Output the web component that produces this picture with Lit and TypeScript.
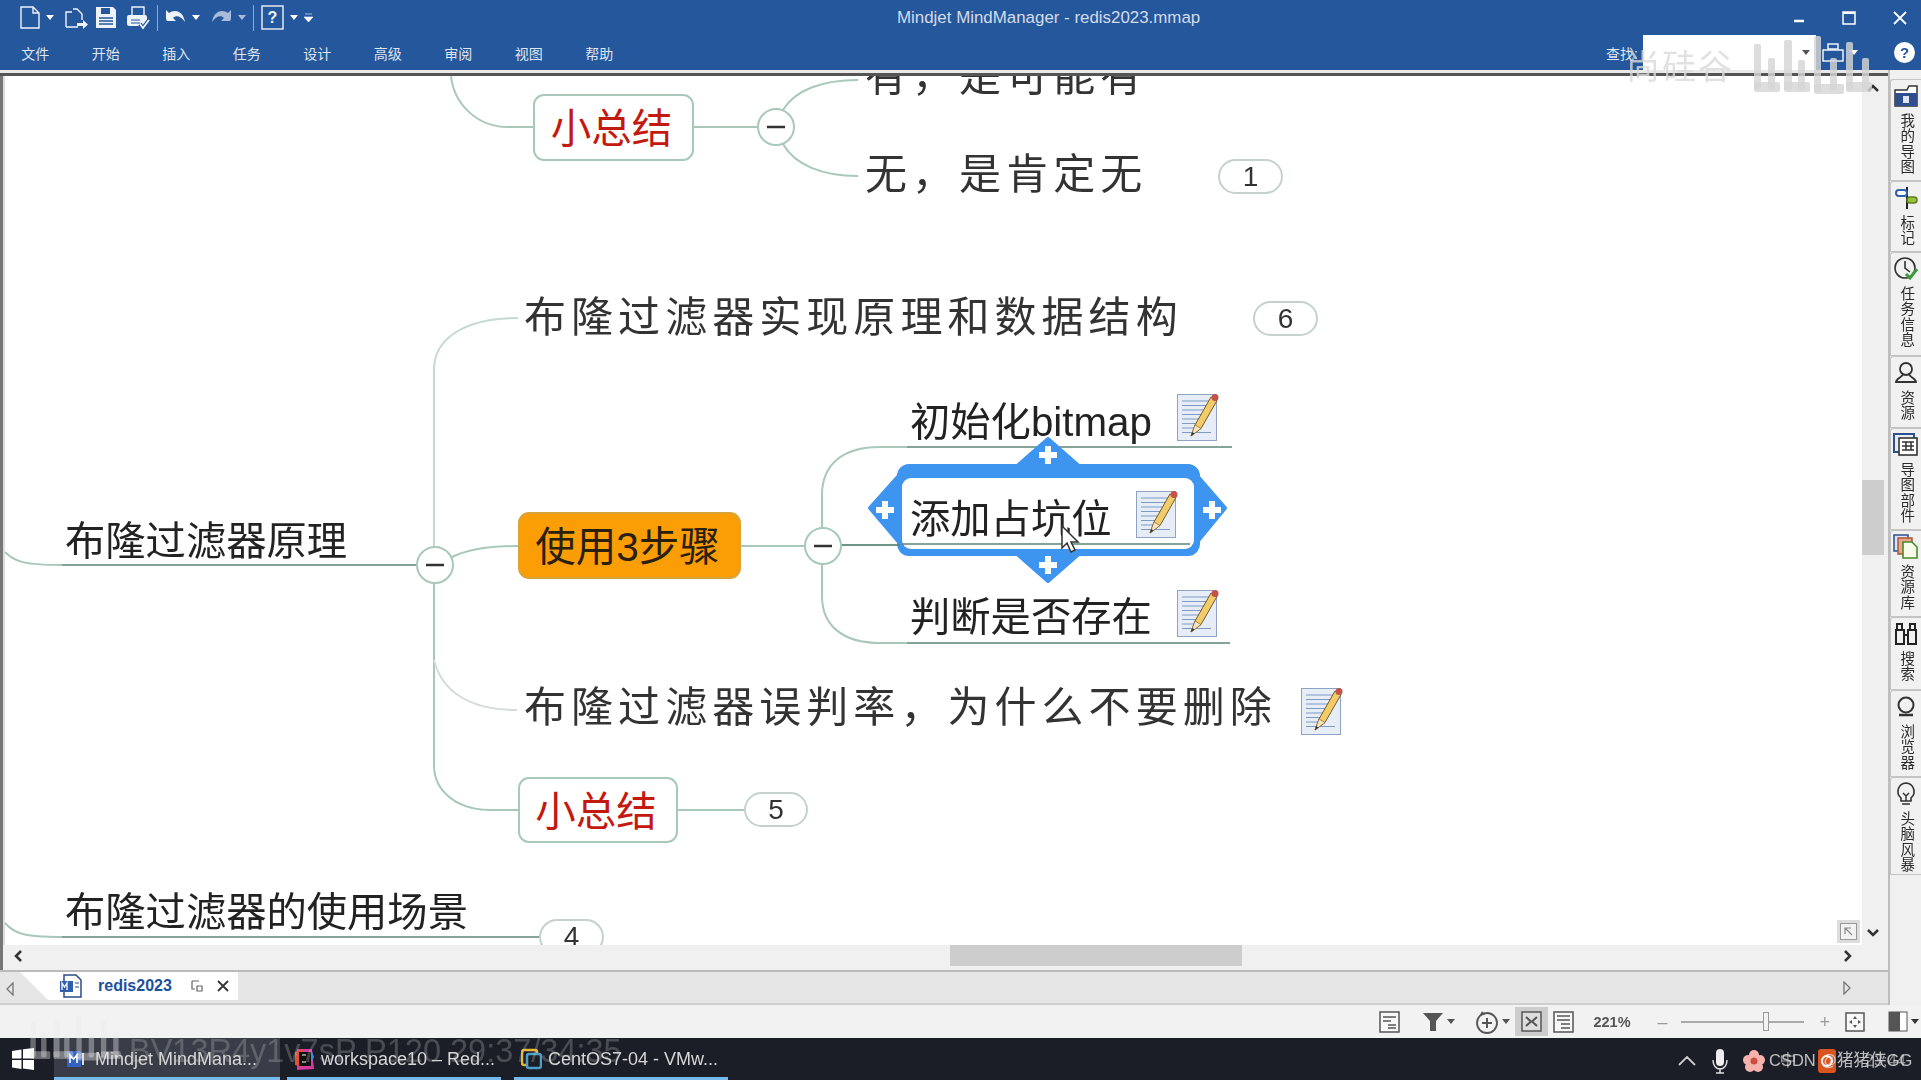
import { LitElement, html, css, svg } from "lit";
import { customElement } from "lit/decorators.js";

const CANVAS_TOP = 76;
const arrow = (c = "#fff") => html`<svg class="drop" width="8" height="5" viewBox="0 0 8 5"><path d="M0 0h8L4 5z" fill=${c}/></svg>`;

const noteIcon = svg`
  <rect x="0.5" y="1.5" width="39" height="46" fill="#e6edf7" stroke="#8ea4c6"/>
  <g stroke="#7d99c4" stroke-width="1.2">
    <path d="M5 8h29M5 12.5h29M5 17h26M5 21.5h22M5 26h20M5 30.5h18M5 35h16M5 39.5h29"/>
  </g>
  <path d="M14 43l4-11L34 4l6 3.5L24 35.500z" fill="#f2cb6a" stroke="#7a5a25" stroke-width="1"/>
  <path d="M14 43l4-11 6 3.500z" fill="#f6e4c0" stroke="#7a5a25" stroke-width=".6"/>
  <path d="M14 43l1.300-4 2.200 1.500z" fill="#333"/>
  <circle cx="38" cy="4.500" r="3.500" fill="#c4524a"/>
`;

const links = svg`
  <g fill="none" stroke="#a8c8ba" stroke-width="2">
    <path d="M451 76C454 105 478 127 508 127H533"/>
    <path d="M694 127H758"/>
    <path d="M783 110C795 90 822 80 858 80"/>
    <path d="M783 144C795 165 822 176 858 176"/>
    <path d="M434 547V370C434 338 465 318 518 318" stroke="#c6d9d0"/>
    <path d="M434 583V765C434 792 458 810 490 810H518"/>
    <path d="M434 660C442 692 470 710 517 710" stroke="#d4dbd8"/>
    <path d="M452 557C468 549 490 546 518 546"/>
    <path d="M741 546H805"/>
    <path d="M822 528V495C822 465 842 447 880 447H907"/>
    <path d="M822 564V596C822 625 842 643 880 643H907"/>
    <path d="M841 545H905"/>
    <path d="M678 810H744"/>
    <path d="M5 552C14 561 22 565 62 565"/>
    <path d="M5 923C14 933 22 937 62 937"/>
  </g>
  <g fill="none" stroke="#5d8574" stroke-width="1.600">
    <path d="M62 565H416"/>
    <path d="M62 937H540"/>
    <path d="M907 447H1232"/>
    <path d="M907 643H1230"/>
  </g>
`;

const circle = (x: number, y: number) => svg`
  <circle cx=${x} cy=${y} r="18" fill="#fff" stroke="#a8c8ba" stroke-width="2"/>
  <path d="M${x - 9} ${y}h18" stroke="#333" stroke-width="2.500"/>
`;

const plus = (x: number, y: number) => svg`<path d="M${x - 9} ${y}h18M${x} ${y - 9}v18" stroke="#fff" stroke-width="6"/>`;

const selection = svg`
  <g fill="#3d95f0" stroke="#3d95f0" stroke-width="4" stroke-linejoin="round">
    <rect x="899" y="466" width="299" height="88" rx="10"/>
    <path d="M1015 468L1048 439L1081 468Z"/>
    <path d="M1015 552L1048 581L1081 552Z"/>
    <path d="M904 470L870 508L904 548Z"/>
    <path d="M1192 470L1225 508L1192 548Z"/>
  </g>
  <rect x="902" y="478" width="292" height="71" rx="9" fill="#fff"/>
  <path d="M842 545H900" stroke="#5d8574" stroke-width="1.600"/>
  <path d="M902 544H1190" stroke="#5d8574" stroke-width="1.600"/>
  ${plus(1048, 455)}${plus(885, 510)}${plus(1212, 510)}${plus(1048, 565)}
`;

const cursor = svg`<path d="M1062 526v22l5-5 4 9 4-2-4-8h7z" fill="#fff" stroke="#333" stroke-width="1.500"/>`;

const TEXTS = [
  { t: "有，是可能有", x: 865, y: 77, c: "wide" },
  { t: "无，是肯定无", x: 865, y: 175, c: "wide" },
  { t: "布隆过滤器实现原理和数据结构", x: 524, y: 318, c: "wide" },
  { t: "初始化bitmap", x: 910, y: 423, c: "" },
  { t: "添加占坑位", x: 910, y: 520, c: "" },
  { t: "判断是否存在", x: 910, y: 618, c: "" },
  { t: "布隆过滤器原理", x: 65, y: 542, c: "" },
  { t: "布隆过滤器误判率，为什么不要删除", x: 524, y: 708, c: "wide" },
  { t: "布隆过滤器的使用场景", x: 65, y: 913, c: "" },
];
const BOXES = [
  { t: "小总结", x: 533, y: 94, w: 161, h: 67, c: "red" },
  { t: "使用3步骤", x: 518, y: 512, w: 223, h: 67, c: "orange" },
  { t: "小总结", x: 518, y: 777, w: 160, h: 66, c: "red" },
];
const BADGES = [
  { t: "1", x: 1218, y: 159, w: 65, h: 35 },
  { t: "6", x: 1253, y: 301, w: 65, h: 35 },
  { t: "5", x: 744, y: 792, w: 64, h: 35 },
  { t: "4", x: 539, y: 919, w: 65, h: 36 },
];
const NOTES = [
  { x: 1177, y: 393 },
  { x: 1136, y: 490 },
  { x: 1177, y: 589 },
  { x: 1301, y: 687 },
];

const TABS: { t: string; h: number; icon: any }[] = [
  { t: "我的导图", h: 102, icon: svg`<path d="M3 8h12l2-4h8v20H3z" fill="#fff" stroke="#333" stroke-width="1.500" transform="translate(-1 -1)"/><rect x="2" y="10" width="22" height="13" fill="#2f4f8f"/><rect x="10" y="13" width="6" height="7" fill="#dfe6f2"/>` },
  { t: "标记", h: 71, icon: svg`<path d="M14 2v22" stroke="#222" stroke-width="2" fill="none"/><rect x="3" y="5" width="11" height="6" rx="3" fill="#fff" stroke="#2f5fae" stroke-width="2"/><rect x="14" y="12" width="10" height="6" rx="3" fill="#9ac13c" stroke="#5a7f1c" stroke-width="1.500"/>` },
  { t: "任务信息", h: 104, icon: svg`<circle cx="12" cy="12" r="10" fill="none" stroke="#333" stroke-width="1.600"/><path d="M12 5v7l5 4" fill="none" stroke="#333" stroke-width="1.600"/><path d="M13 18l4 4 7-9" fill="none" stroke="#3c9a3c" stroke-width="3"/>` },
  { t: "资源", h: 72, icon: svg`<circle cx="13" cy="9" r="6" fill="none" stroke="#333" stroke-width="1.800"/><path d="M10 14c0 3-7 4-7 8h20c0-4-7-5-7-8" fill="none" stroke="#333" stroke-width="1.800"/>` },
  { t: "导图部件", h: 102, icon: svg`<rect x="1" y="2" width="20" height="18" fill="#e8eef8" stroke="#2f4f8f" stroke-width="2"/><rect x="6" y="6" width="18" height="17" fill="#fff" stroke="#333" stroke-width="1.600"/><path d="M9 14h12M13 10v8M18 10v8M9 10h12M9 18h12" stroke="#333" stroke-width="1.500"/>` },
  { t: "资源库", h: 87, icon: svg`<rect x="1" y="1" width="14" height="16" fill="#dde6f6" stroke="#2f4f8f" stroke-width="1.500"/><rect x="5" y="4" width="14" height="16" fill="#e9a68a" stroke="#b0552f" stroke-width="1.500"/><path d="M10 8h9l5 5v11H10z" fill="#f7fbe9" stroke="#4a8a2a" stroke-width="1.600"/>` },
  { t: "搜索", h: 73, icon: svg`<rect x="3" y="9" width="8" height="14" fill="none" stroke="#222" stroke-width="2"/><rect x="15" y="9" width="8" height="14" fill="none" stroke="#222" stroke-width="2"/><rect x="4" y="3" width="5" height="6" fill="none" stroke="#222" stroke-width="2"/><rect x="17" y="3" width="5" height="6" fill="none" stroke="#222" stroke-width="2"/><path d="M11 14h4" stroke="#222" stroke-width="2"/>` },
  { t: "浏览器", h: 87, icon: svg`<circle cx="13" cy="11" r="7.500" fill="none" stroke="#333" stroke-width="2"/><path d="M6 21h14" stroke="#333" stroke-width="2.500"/>` },
  { t: "头脑风暴", h: 98, icon: svg`<path d="M13 2a8.500 8.500 0 0 0-5 15v3h10v-3a8.500 8.500 0 0 0-5-15z" fill="none" stroke="#333" stroke-width="1.600"/><path d="M10 12l3 3 3-3M13 15v5M9 23h8" fill="none" stroke="#333" stroke-width="1.500"/>` },
];

const biliBars = (bars: number[][], fill: string) => svg`${bars.map(([x, y, h, w]) => svg`<rect x=${x} y=${y} width=${w ?? 7} height=${h} rx="2" fill=${fill}/>`)}`;
const BILI = [
  [2, 8, 46], [2, 46, 10, 26], [16, 22, 32], [32, 4, 50, 8], [32, 46, 10, 26], [46, 24, 30],
  [62, 0, 56], [62, 48, 10, 30], [78, 22, 32], [94, 6, 48], [94, 46, 10, 26], [110, 22, 32],
];

@customElement("app-root")
export class AppRoot extends LitElement {
  static styles = css`
    :host { display: block; width: 1921px; height: 1080px; position: relative; overflow: hidden; background: #f0f0f0;
      font-family: "Liberation Sans", "Noto Sans CJK SC", sans-serif; color: #222; }
    .app { display: flex; flex-direction: column; height: 1080px; filter: blur(0.45px); }
    .ribbon { height: 70px; background: #25579c; color: #dfe6f1; flex: none; display: flex; flex-direction: column; }
    .titlerow { height: 35px; display: grid; grid-template-columns: 897px 302px 1fr; align-items: center; }
    .qa { display: flex; align-items: center; padding-left: 20px; gap: 6px; }
    .qa svg { display: block; }
    .sep { width: 1px; height: 26px; background: #8fa9cf; margin: 0 1px; }
    .title { text-align: center; font: 16.900px "Liberation Sans", sans-serif; color: #d4dcea; white-space: nowrap; }
    .win { display: flex; justify-content: flex-end; align-items: center; padding-right: 14px; gap: 37px; }
    .menurow { height: 35px; display: flex; align-items: center; }
    .menu { display: flex; }
    .menu span { width: 70.500px; text-align: center; font-size: 14px; color: #dfe6f1; }
    .find { margin-left: auto; display: flex; align-items: center; font-size: 14px; }
    .find-input { width: 173px; height: 35px; margin: 0 6px 0 5px; background: #fff; display: flex; align-items: center; justify-content: flex-end; padding-right: 6px; box-sizing: border-box; }
    .find .help { width: 21px; height: 21px; border-radius: 50%; background: #fff; color: #25579c; font: bold 15px/21px "Liberation Sans", sans-serif; text-align: center; margin: 0 6px 0 36px; }

    .work { flex: 1; display: flex; min-height: 0; }
    .doc { width: 1888px; flex: none; display: flex; flex-direction: column; border-right: 2px solid #bdbdbd; }
    .rule { height: 6px; flex: none; background: #e9e9e9; border-bottom: 3px solid #555; box-sizing: border-box; }
    .mid { height: 869px; flex: none; display: flex; }
    .canvas { width: 1862px; flex: none; background: #fff; position: relative; overflow: hidden; box-shadow: inset 3px 0 #777, inset 5px 0 #ddd; }
    .canvas > svg.links { position: absolute; left: 0; top: ${-CANVAS_TOP}px; }
    .vs { flex: 1; background: #f0f0f0; display: flex; flex-direction: column; align-items: center; justify-content: space-between; position: relative; padding: 8px 5px 8px 0; box-sizing: border-box; }
    .vthumb { position: absolute; left: 0; top: 404px; width: 22px; height: 75px; background: #cdcdcd; }
    .t { position: absolute; white-space: nowrap; font-size: 40.300px; line-height: 1; transform: translateY(-50%); color: #222; }
    .t.wide { font-size: 42px; letter-spacing: 5.050px; color: #333; }
    .box { position: absolute; box-sizing: border-box; border-radius: 11px; display: flex; align-items: center; justify-content: center; font-size: 40.500px; line-height: 1; padding: 4px 4px 0 0; }
    .box.red { background: #fff; border: 2px solid #a8c8ba; color: #c4190f; }
    .box.orange { background: #fb9d05; border: 2px solid #d8a437; color: #2a2010; }
    .badge { position: absolute; box-sizing: border-box; background: #fff; border: 2px solid #c5d2cc; border-radius: 18px; display: flex; align-items: center; justify-content: center; font: 28px/1 "Liberation Sans", sans-serif; color: #333; }
    .note { position: absolute; }
    .corner { position: absolute; right: 2px; bottom: 2px; width: 23px; height: 23px; background: #ddd; display: flex; align-items: center; justify-content: center; }

    .hs { height: 25px; flex: none; background: #f0f0f0; display: flex; align-items: center; justify-content: space-between; padding: 0 36px 4px 14px; box-sizing: border-box; position: relative; box-shadow: inset 3px 0 #777; }
    .hthumb { position: absolute; left: 950px; top: 0; width: 292px; height: 21px; background: #cdcdcd; }
    .tabs { height: 35px; flex: none; box-sizing: border-box; background: #e6e6e6; border-top: 2px solid #bbb; border-bottom: 2px solid #cfcfcf; display: flex; align-items: flex-start; padding-left: 6px; position: relative; }
    .back { display: block; margin-top: 10px; }
    .tab { margin-left: 6px; width: 218px; height: 28px; background: #fff; clip-path: polygon(0 0, 100% 0, 100% 100%, 28px 100%); display: flex; align-items: center; padding-left: 39px; box-sizing: border-box; gap: 8px; }
    .tab b { font: bold 16px "Liberation Sans", sans-serif; color: #1d4f9f; margin: 0 9px 0 7px; width: 76px; }
    .tabs .fwd { position: absolute; right: 37px; top: 9px; }

    .panel { flex: 1; padding-top: 9px; background: #f0f0f0; display: flex; flex-direction: column; }
    .ptab { box-sizing: border-box; border: 1px solid #c4c4c4; border-right: none; border-top-left-radius: 3px; display: flex; flex-direction: column; align-items: center; padding-top: 3px; background: #f1f1f1; }
    .ptab svg { flex: none; }
    .ptab span { writing-mode: vertical-rl; white-space: nowrap; font-size: 14.500px; line-height: 1; margin-top: 4px; letter-spacing: 1px; color: #2b2b2b; }

    .status { height: 33px; flex: none; background: #f2f2f2; display: flex; align-items: center; justify-content: flex-end; gap: 0; padding-right: 2px; color: #555; }
    .status .item { display: flex; align-items: center; gap: 3px; }
    .status .sel { background: #cdcdcd; width: 33px; height: 29px; display: flex; align-items: center; justify-content: center; }
    .pct { font: bold 14.500px "Liberation Sans", sans-serif; color: #555; width: 44px; }
    .slider { width: 123px; height: 2px; background: #aaa; position: relative; }
    .slider i { position: absolute; left: 82px; top: -9px; width: 6px; height: 19px; background: #f2f2f2; border: 1px solid #999; box-sizing: border-box; }
    .zoomsign { color: #999; font: 18px/1 "Liberation Sans", sans-serif; }

    .taskbar { height: 42px; flex: none; background: #1b1d27; display: flex; align-items: stretch; color: #d7d7d7; font: 18px "Liberation Sans", sans-serif; }
    .start { width: 54px; display: flex; align-items: center; justify-content: center; flex: none; padding-right: 8px; box-sizing: border-box; }
    .task { width: 214px; flex: none; margin-right: 13px; border-bottom: 3px solid #76b9ed; box-sizing: border-box; display: flex; align-items: center; padding: 3px 0 0 7px; gap: 6px; white-space: nowrap; overflow: hidden; }
    .task.on { background: #3a3d47; width: 226px; margin-right: 7px; padding-left: 12px; gap: 8px; }
    .tray { margin-left: auto; display: flex; align-items: center; padding: 3px 15px 0 0; color: #cfcfcf; white-space: nowrap; font-size: 16.500px; }

    .wm { position: absolute; pointer-events: none; }
    .wm-sgg { left: 1626px; top: 50px; font-size: 34px; line-height: 1; letter-spacing: 2px; color: rgba(218,218,218,.8); white-space: nowrap; }
    .wm-bv { left: 129px; top: 1035px; font: 32.500px/1 "Liberation Sans", sans-serif; color: rgba(205,205,205,.27); white-space: nowrap; }
    .wm-csdn { left: 1769px; top: 1051px; font-size: 16.500px; line-height: 1.2; color: rgba(225,225,225,.82); white-space: pre; }
  `;

  render() {
    return html`<div class="app">
      ${this.ribbon()}
      <div class="work">
        <div class="doc">
          <div class="rule"></div>
          <div class="mid">
            ${this.canvas()}
            <div class="vs">
              <svg width="12" height="8" viewBox="0 0 12 8"><path d="M1 7l5-5 5 5" fill="none" stroke="#333" stroke-width="2.500"/></svg>
              <div class="vthumb"></div>
              <svg width="12" height="8" viewBox="0 0 12 8"><path d="M1 1l5 5 5-5" fill="none" stroke="#333" stroke-width="2.500"/></svg>
            </div>
          </div>
          <div class="hs">
            <svg width="8" height="12" viewBox="0 0 8 12"><path d="M7 1L2 6l5 5" fill="none" stroke="#333" stroke-width="2.500"/></svg>
            <div class="hthumb"></div>
            <svg width="8" height="12" viewBox="0 0 8 12"><path d="M1 1l5 5-5 5" fill="none" stroke="#333" stroke-width="2.500"/></svg>
          </div>
          <div class="tabs">
            <svg class="back" width="8" height="14" viewBox="0 0 8 14"><path d="M7 1L1 7l6 6z" fill="none" stroke="#777" stroke-width="1.300"/></svg>
            <div class="tab">
              <svg width="24" height="24" viewBox="0 0 24 24"><path d="M5 1h12l5 5v17H5z" fill="#fff" stroke="#2c4a86" stroke-width="1.500"/><rect x="1" y="7" width="13" height="11" fill="#2f5fae"/><path d="M3 16V9l2.500 4L8 9v7" stroke="#fff" fill="none" stroke-width="1.300"/><path d="M16 9h4M16 13h4" stroke="#2c4a86"/></svg>
              <b>redis2023</b>
              <svg width="12" height="12" viewBox="0 0 12 12"><path d="M1 1h7M1 1v8h3M6 6h5v5H6z" fill="none" stroke="#666" stroke-width="1.200"/></svg>
              <svg style="margin-left:6px" width="12" height="12" viewBox="0 0 12 12"><path d="M1 1l10 10M11 1L1 11" stroke="#333" stroke-width="1.800"/></svg>
            </div>
            <svg class="fwd" width="8" height="14" viewBox="0 0 8 14"><path d="M1 1l6 6-6 6z" fill="none" stroke="#777" stroke-width="1.300"/></svg>
          </div>
        </div>
        <div class="panel">
          ${TABS.map(t => html`<div class="ptab" style="height:${t.h}px">
            <svg width="26" height="26" viewBox="0 0 26 26">${t.icon}</svg><span>${t.t}</span></div>`)}
        </div>
      </div>
      ${this.status()}
      ${this.taskbar()}
    </div>
    ${this.watermarks()}`;
  }

  ribbon() {
    const s = "#eef3fa";
    return html`<div class="ribbon">
      <div class="titlerow">
        <div class="qa">
          <svg width="20" height="23" viewBox="0 0 20 23"><path d="M1 1h12l6 6v15H1zM13 1v6h6" fill="none" stroke=${s} stroke-width="1.400"/></svg>${arrow()}
          <svg style="margin-left:5px" width="24" height="23" viewBox="0 0 24 23"><path d="M8 3h4l5 5v6M1 21V6h6M1 21h12" fill="none" stroke=${s} stroke-width="1.400"/><path d="M12 17h6v-3l5 4.500-5 4.500v-3h-6z" fill=${s}/></svg>
          <svg width="22" height="23" viewBox="0 0 22 23"><path d="M1 1h17l3 3v18H1z" fill=${s}/><rect x="6" y="2" width="9" height="6" fill="#25579c"/><path d="M4 12h14M4 15h14M4 18h14" stroke="#25579c" stroke-width="1.500"/></svg>
          <svg style="margin-left:3px" width="24" height="24" viewBox="0 0 24 24"><path d="M6 9V1h12v8" fill="none" stroke=${s} stroke-width="1.400"/><rect x="1" y="9" width="20" height="11" rx="2" fill=${s}/><path d="M5 14h9M5 17h9" stroke="#25579c"/><path d="M14 18l3 4 6-8" stroke="#25579c" stroke-width="4" fill="none"/><path d="M14 18l3 4 6-8" stroke=${s} stroke-width="1.800" fill="none"/></svg>
          <span class="sep"></span>
          <svg width="21" height="19" viewBox="0 0 21 19"><path d="M1 11V2l3 3c5-4 14-3 16 9-4-6-9-7-12-4l3 3H2z" fill=${s}/></svg>${arrow()}
          <svg style="margin-left:5px" width="21" height="19" viewBox="0 0 21 19"><path d="M20 11V2l-3 3C12 1 3 2 1 14c4-6 9-7 12-4l-3 3h9z" fill="#a8bcd9"/></svg>${arrow("#a8bcd9")}
          <span class="sep"></span>
          <svg width="23" height="25" viewBox="0 0 23 25"><rect x="1" y="1" width="21" height="23" fill="none" stroke=${s} stroke-width="1.400"/><text x="11.500" y="18" text-anchor="middle" font-family="Liberation Sans" font-size="16" font-weight="bold" fill=${s}>?</text></svg>${arrow()}
          <svg width="9" height="9" viewBox="0 0 9 9"><path d="M1 1h7M0 4h9L4.500 9z" fill="#fff" stroke="#fff" stroke-width=".6"/></svg>
        </div>
        <div class="title">Mindjet MindManager - redis2023.mmap</div>
        <div class="win">
          <svg width="12" height="12" viewBox="0 0 12 12"><path d="M1 9h10" stroke="#fff" stroke-width="2.500"/></svg>
          <svg width="14" height="14" viewBox="0 0 14 14"><rect x="1" y="1" width="12" height="12" fill="none" stroke="#fff" stroke-width="1.500"/><path d="M1 2h12" stroke="#fff" stroke-width="2"/></svg>
          <svg width="14" height="14" viewBox="0 0 14 14"><path d="M1 1l12 12M13 1L1 13" stroke="#fff" stroke-width="1.800"/></svg>
        </div>
      </div>
      <div class="menurow">
        <div class="menu">${["文件", "开始", "插入", "任务", "设计", "高级", "审阅", "视图", "帮助"].map(m => html`<span>${m}</span>`)}</div>
        <div class="find">
          <span>查找:</span>
          <div class="find-input">${arrow("#555")}</div>
          <svg width="22" height="20" viewBox="0 0 22 20"><rect x="6" y="1" width="10" height="5" fill="none" stroke="#eef3fa" stroke-width="1.500"/><rect x="1" y="7" width="20" height="11" fill="none" stroke="#eef3fa" stroke-width="1.500"/></svg>
          <span style="margin-left:6px;display:flex">${arrow()}</span>
          <div class="help">?</div>
        </div>
      </div>
    </div>`;
  }

  canvas() {
    return html`<div class="canvas">
      <svg class="links" width="1862" height="1030" viewBox="0 0 1862 1030">
        ${links}
        ${circle(776, 127)}${circle(435, 565)}
        ${selection}
        ${circle(823, 546)}
      </svg>
      ${TEXTS.map(n => html`<div class="t ${n.c}" style="left:${n.x}px;top:${n.y - CANVAS_TOP}px">${n.t}</div>`)}
      ${BOXES.map(b => html`<div class="box ${b.c}" style="left:${b.x}px;top:${b.y - CANVAS_TOP}px;width:${b.w}px;height:${b.h}px">${b.t}</div>`)}
      ${BADGES.map(b => html`<div class="badge" style="left:${b.x}px;top:${b.y - CANVAS_TOP}px;width:${b.w}px;height:${b.h}px">${b.t}</div>`)}
      ${NOTES.map(n => html`<svg class="note" style="left:${n.x}px;top:${n.y - CANVAS_TOP}px" width="44" height="49" viewBox="0 0 44 49">${noteIcon}</svg>`)}
      <svg class="links" width="1862" height="1030" viewBox="0 0 1862 1030" style="pointer-events:none">${cursor}</svg>
      <div class="corner"><svg width="17" height="17" viewBox="0 0 17 17"><rect x=".5" y=".5" width="16" height="16" fill="#f2f2f2" stroke="#999"/><path d="M5 11V5h6M5 5l7 7" fill="none" stroke="#888" stroke-width="1.200"/></svg></div>
    </div>`;
  }

  status() {
    const c = "#555";
    return html`<div class="status">
      <svg style="margin-right:22px" width="21" height="22" viewBox="0 0 21 22"><rect x="1" y="1" width="19" height="20" fill="#f8f8f8" stroke=${c} stroke-width="1.500"/><path d="M4 6h13M4 10h8M9 14h8M9 17h8" stroke=${c} stroke-width="1.400"/></svg>
      <span class="item" style="margin-right:20px"><svg width="22" height="22" viewBox="0 0 22 22"><path d="M1 2h20l-7 8v10h-6V10z" fill=${c}/></svg>${arrow(c)}</span>
      <span class="item" style="margin-right:5px"><svg width="24" height="24" viewBox="0 0 24 24"><circle cx="12" cy="13" r="10" fill="none" stroke=${c} stroke-width="1.800"/><path d="M12 8v10M7 13h10" stroke=${c} stroke-width="2"/><path d="M7 1l3 4-5 0z" fill=${c}/></svg>${arrow(c)}</span>
      <span class="sel"><svg width="21" height="21" viewBox="0 0 21 21"><rect x="1" y="1" width="19" height="19" fill="#ddd" stroke=${c} stroke-width="1.500"/><path d="M5 6l5 4.500L5 15M16 6l-5 4.500 5 4.500" fill="none" stroke=${c} stroke-width="2"/></svg></span>
      <svg style="margin:0 19px 0 5px" width="21" height="22" viewBox="0 0 21 22"><rect x="1" y="1" width="19" height="20" fill="#f8f8f8" stroke=${c} stroke-width="1.500"/><path d="M4 5h13M4 9h13M8 13h9M8 17h9" stroke=${c} stroke-width="1.400"/></svg>
      <span class="pct">221%</span>
      <span class="zoomsign" style="margin:0 14px 0 20px">–</span>
      <div class="slider"><i></i></div>
      <span class="zoomsign" style="margin:0 15px 0 15px">+</span>
      <svg style="margin-right:23px" width="20" height="20" viewBox="0 0 20 20"><rect x="1" y="1" width="18" height="18" fill="#f8f8f8" stroke=${c} stroke-width="1.500"/><path d="M10 4l2 3H8zM10 16l2-3H8zM4 10l3-2v4zM16 10l-3-2v4z" fill=${c}/></svg>
      <span class="item"><svg width="20" height="21" viewBox="0 0 20 21"><rect x="1" y="1" width="18" height="19" fill="#fff" stroke=${c}/><rect x="1" y="1" width="11" height="19" fill=${c}/></svg>${arrow("#333")}</span>
    </div>`;
  }

  taskbar() {
    return html`<div class="taskbar">
      <div class="start"><svg width="24" height="24" viewBox="0 0 24 24"><path d="M1 4l9.500-1.500v9H1zM12 2.200L23 1v10.500H12zM1 13h9.500v9L1 20.500zM12 13h11v10l-11-1.500z" fill="#fff"/></svg></div>
      <div class="task on"><svg width="21" height="22" viewBox="0 0 21 22"><rect x="1" y="3" width="14" height="16" fill="#3461c0"/><path d="M4 15V7l3.500 4L11 7v8" stroke="#fff" fill="none" stroke-width="1.600"/><path d="M17 5v12" stroke="#ddd" stroke-width="2"/></svg><span>Mindjet MindMana...</span></div>
      <div class="task"><svg width="21" height="24" viewBox="0 0 21 24"><path d="M3 2h15l2 20-17 1z" fill="#d63aa0"/><path d="M1 5l8-3v18l-8-2z" fill="#e0503a"/><path d="M17 2l3 8-4 8z" fill="#3a90e0"/><rect x="5" y="5" width="12" height="14" fill="#111"/><path d="M8 8h4M8 15h4" stroke="#fff"/></svg><span>workspace10 – Red...</span></div>
      <div class="task"><svg width="21" height="22" viewBox="0 0 21 22"><rect x="1" y="2" width="15" height="15" rx="2" fill="none" stroke="#e9b632" stroke-width="2.500"/><rect x="6" y="6" width="14" height="14" rx="2" fill="#1b1d27" stroke="#4ca0c8" stroke-width="2.500"/></svg><span>CentOS7-04 - VMw...</span></div>
      <div class="tray">
        <svg width="18" height="10" viewBox="0 0 18 10"><path d="M1 9l8-8 8 8" fill="none" stroke="#cfcfcf" stroke-width="1.800"/></svg>
        <svg style="margin-left:15px" width="18" height="26" viewBox="0 0 18 26"><rect x="5" y="1" width="8" height="17" rx="4" fill="#eee"/><path d="M2 12c0 12 14 12 14 0M9 20v5M5 25h8" fill="none" stroke="#ddd" stroke-width="1.500"/></svg>
        <svg style="margin-left:14px" width="22" height="22" viewBox="0 0 22 22"><g fill="#f6b3ad"><circle cx="11" cy="5" r="5"/><circle cx="5" cy="10" r="5"/><circle cx="17" cy="10" r="5"/><circle cx="7" cy="17" r="5"/><circle cx="15" cy="17" r="5"/></g><circle cx="11" cy="11" r="3.500" fill="#c9503f"/></svg>
        <span style="margin-left:15px;color:#9a9a9a">中</span>
        <svg style="margin-left:21px" width="18" height="24" viewBox="0 0 18 24"><rect width="18" height="24" rx="3" fill="#d9541e"/><circle cx="9" cy="12" r="5" fill="none" stroke="#fff" stroke-width="2"/></svg>
        <span style="margin-left:29px;color:#8a8a8a">23:44</span>
      </div>
    </div>`;
  }

  watermarks() {
    const fill = "rgba(214,214,214,.82)";
    return html`
      <div class="wm wm-sgg">尚硅谷</div>
      <svg class="wm" style="left:1752px;top:36px" width="136" height="60" viewBox="0 0 136 60">${biliBars(BILI, fill)}</svg>
      <svg class="wm" style="left:27px;top:1016px" width="108" height="46" viewBox="0 0 136 60">${biliBars(BILI, "rgba(235,235,235,.38)")}</svg>
      <div class="wm wm-bv">BV13R4y1v7sP P120 29:37/34:35</div>
      <div class="wm wm-csdn">CSDN @猪猪侠GG</div>
    `;
  }
}
